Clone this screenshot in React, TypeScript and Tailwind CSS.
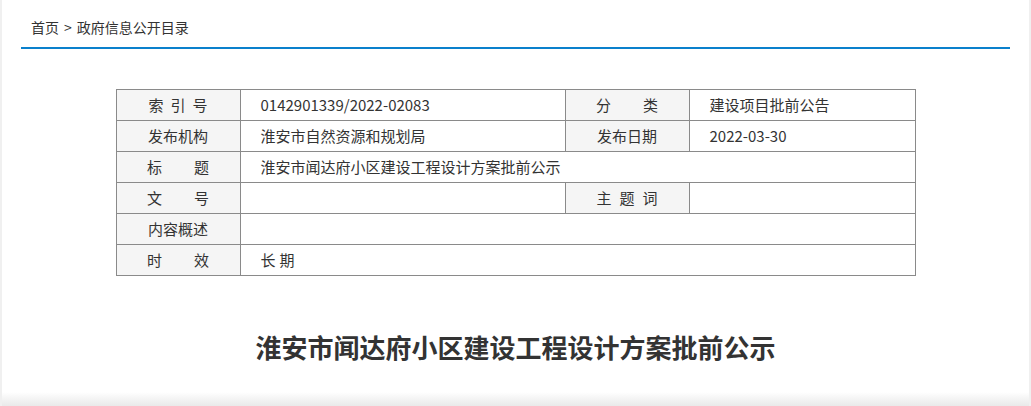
const font = { fontFamily: '"Noto Sans CJK SC", "Noto Sans", sans-serif' };

function Label({ chars, gap }: { chars: string[]; gap: string }) {
  return (
    <div className={`h-[31px] border-l border-t border-[#8a8a8a] bg-[#f5f5f5] flex items-center justify-center text-[15px] text-[#333] ${gap}`}>
      {chars.map((c, i) => (
        <span key={i}>{c}</span>
      ))}
    </div>
  );
}

function Value({ text, span, gap = "" }: { text?: string; span?: boolean; gap?: string }) {
  return (
    <div
      className={`h-[31px] border-l border-t border-[#8a8a8a] bg-white flex items-center pl-[20px] text-[15px] text-[#333] ${gap} ${
        span ? "col-span-3" : ""
      }`}
    >
      {gap ? text?.split(" ").map((t, i) => <span key={i}>{t}</span>) : text}
    </div>
  );
}

export default function App() {
  return (
    <div className="h-[406px] bg-[#f0f0f0] px-[2px] overflow-hidden" style={font}>
      <div className="bg-white h-full flex flex-col">
        {/* 面包屑 */}
        <div className="mx-[19px] border-b-2 border-[#0a80cc] pt-[17px] pb-[10px] pl-[10px] text-[14px] leading-[20px] text-[#333] flex">
          <span>首页</span>
          <span className="mx-[5px]">&gt;</span>
          <span>政府信息公开目录</span>
        </div>

        {/* 信息表 */}
        <div className="mt-[40px] mx-auto w-[800px] grid grid-cols-[124px_325px_124px_226px] border-r border-b border-[#8a8a8a]">
          <Label chars={["索", "引", "号"]} gap="gap-[7px]" />
          <Value text="0142901339/2022-02083" />
          <Label chars={["分", "类"]} gap="gap-[32px]" />
          <Value text="建设项目批前公告" />

          <Label chars={["发", "布", "机", "构"]} gap="gap-0" />
          <Value text="淮安市自然资源和规划局" />
          <Label chars={["发", "布", "日", "期"]} gap="gap-0" />
          <Value text="2022-03-30" />

          <Label chars={["标", "题"]} gap="gap-[32px]" />
          <Value text="淮安市闻达府小区建设工程设计方案批前公示" span />

          <Label chars={["文", "号"]} gap="gap-[32px]" />
          <Value />
          <Label chars={["主", "题", "词"]} gap="gap-[8px]" />
          <Value />

          <Label chars={["内", "容", "概", "述"]} gap="gap-0" />
          <Value span />

          <Label chars={["时", "效"]} gap="gap-[32px]" />
          <Value text="长 期" span gap="gap-[4px]" />
        </div>

        {/* 标题 */}
        <h1 className="mt-[53px] text-center text-[26px] leading-[36px] font-bold text-[#333]">
          淮安市闻达府小区建设工程设计方案批前公示
        </h1>

        <div className="mt-auto h-[14px] bg-gradient-to-b from-white to-[#e9e9e9]" />
      </div>
    </div>
  );
}
